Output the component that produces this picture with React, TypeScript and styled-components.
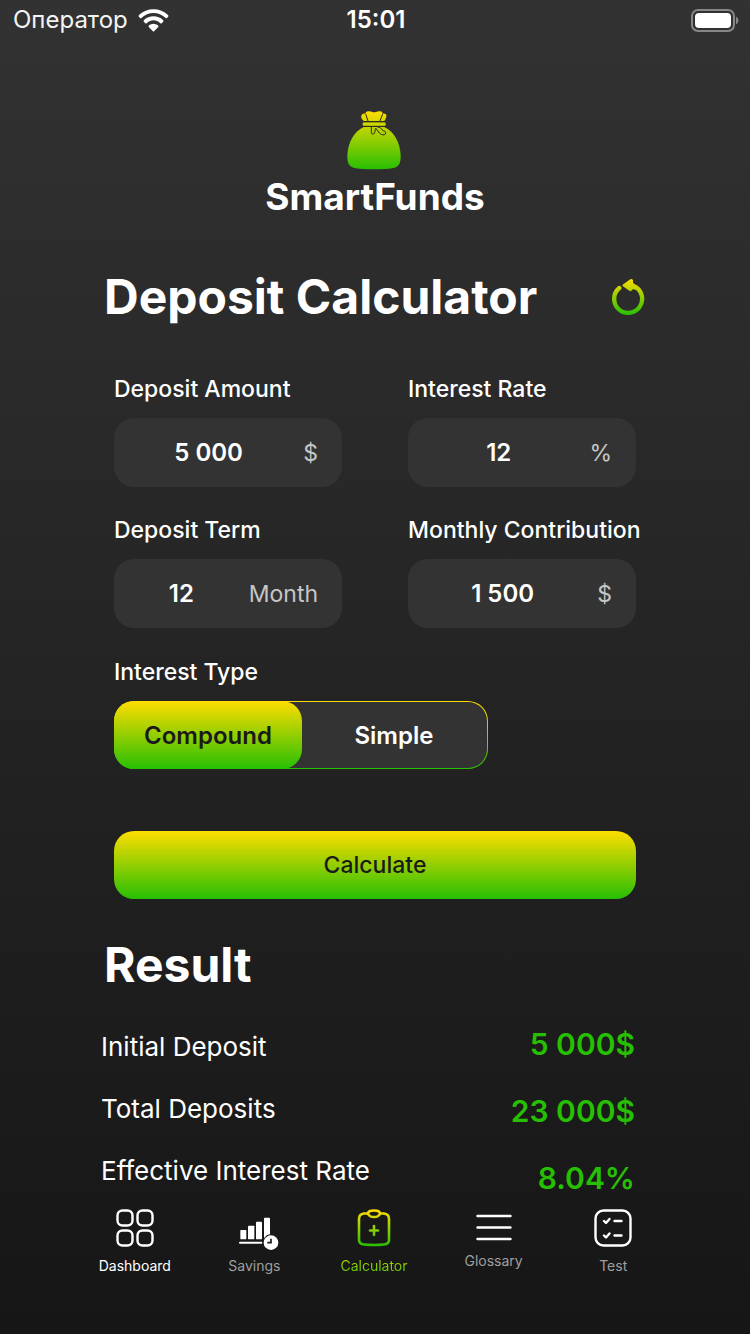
import React, { useState } from "react";
import styled, { createGlobalStyle } from "styled-components";

const YELLOW = "#ffdd00";
const GREEN = "#27bf04";
const FILL = `linear-gradient(180deg, ${YELLOW}, ${GREEN})`;

const GlobalStyle = createGlobalStyle`
  *, *::before, *::after { box-sizing: border-box; }
  body {
    margin: 0;
    background: #161616;
    color: #fff;
    font-family: Inter, "Liberation Sans", sans-serif;
  }
  button, input { font: inherit; color: inherit; }
`;

const Screen = styled.div`
  display: flex;
  flex-direction: column;
  min-height: 100vh;
  background: linear-gradient(180deg, #323232, #161616);
`;

const StatusBar = styled.header`
  display: grid;
  grid-template-columns: 1fr auto 1fr;
  align-items: center;
  height: 40px;
  padding: 0 11px 0 13px;
  font-size: 24px;
  line-height: 28px;
`;

const Carrier = styled.span`
  display: flex;
  align-items: center;
  gap: 10px;
  color: #f4f4f4;
`;

const Clock = styled.time`
  font-weight: 600;
`;

const Battery = styled.svg`
  justify-self: end;
`;

const Brand = styled.div`
  display: flex;
  flex-direction: column;
  align-items: center;
  padding-top: 70px;
`;

const BrandName = styled.p`
  margin: 3px 0 0;
  font-size: 37px;
  font-weight: 700;
  line-height: 48px;
`;

const Main = styled.main`
  flex: 1;
  padding: 0 100px;
`;

const TitleRow = styled.div`
  display: flex;
  align-items: center;
  justify-content: space-between;
  margin-top: 44px;
  padding: 0 1px 0 4px;
`;

const Title = styled.h1`
  margin: 0;
  font-size: 48px;
  font-weight: 700;
  line-height: 64px;
  white-space: nowrap;
`;

const ResetButton = styled.button`
  display: flex;
  padding: 4px;
  border: 0;
  background: none;
`;

const Form = styled.form`
  padding: 44px 14px 0;
`;

const FieldGrid = styled.div`
  display: grid;
  grid-template-columns: 1fr 1fr;
  gap: 27px 66px;
`;

const Caption = styled.span`
  display: block;
  margin-bottom: 13px;
  font-size: 23px;
  font-weight: 500;
  line-height: 32px;
  white-space: nowrap;
`;

const FieldLabel = styled.label`
  display: block;
  min-width: 0;
`;

const FieldBox = styled.span`
  display: flex;
  align-items: center;
  height: 69px;
  padding-right: 24px;
  border-radius: 20px;
  background: #333;
`;

const FieldInput = styled.input`
  flex: 1;
  min-width: 0;
  padding: 0;
  border: 0;
  outline: 0;
  background: none;
  font-size: 24px;
  font-weight: 600;
  text-align: center;
`;

const Unit = styled.span`
  color: #c6c6c6;
  font-size: 23px;
  font-weight: 400;
`;

const TypeGroup = styled.fieldset`
  margin: 28px 0 0;
  padding: 0;
  border: 0;
`;

const TypeLegend = styled.legend`
  padding: 0 0 13px;
  font-size: 23px;
  font-weight: 500;
  line-height: 32px;
`;

const Segments = styled.div`
  display: flex;
  width: calc(72% - 2px);
  height: 68px;
  border: 1px solid transparent;
  border-radius: 20px;
  background: linear-gradient(#333, #333) padding-box, ${FILL} border-box;
`;

const Segment = styled.label<{ $active: boolean }>`
  display: flex;
  flex: 1;
  align-items: center;
  justify-content: center;
  position: relative;
  margin: -1px;
  border-radius: 20px;
  background: ${(p) => (p.$active ? FILL : "none")};
  color: ${(p) => (p.$active ? "#1a1a1a" : "#fff")};
  font-size: 24px;
  font-weight: 600;

  input {
    position: absolute;
    inset: 0;
    margin: 0;
    opacity: 0;
  }
`;

const Submit = styled.button`
  width: 100%;
  height: 68px;
  margin-top: 62px;
  border: 0;
  border-radius: 20px;
  background: ${FILL};
  color: #1a1a1a;
  font-size: 23px;
  font-weight: 500;
`;

const ResultTitle = styled.h2`
  margin: 34px 0 0;
  padding-left: 4px;
  font-size: 48px;
  font-weight: 700;
  line-height: 64px;
`;

const Results = styled.section`
  display: flex;
  justify-content: space-between;
  align-items: flex-start;
  padding: 14px 15px 0 1px;
`;

const ResultNames = styled.ul`
  margin: 5px 0 0;
  padding: 0;
  list-style: none;
  font-size: 26px;
  line-height: 62px;
`;

const ResultValues = styled.ul`
  margin: 0;
  padding: 0;
  list-style: none;
  color: ${GREEN};
  font-size: 30px;
  font-weight: 600;
  line-height: 67px;
  text-align: right;
`;

const TabBar = styled.nav`
  display: grid;
  grid-template-columns: repeat(5, 1fr);
  align-items: start;
  height: 127px;
  margin-top: -4px;
  padding: 0 77px 0 75px;
`;

const Tab = styled.a<{ $tone: "bright" | "muted" | "accent" }>`
  display: flex;
  flex-direction: column;
  align-items: center;
  gap: 8px;
  color: #fff;
  font-size: 14px;
  line-height: 20px;
  text-decoration: none;

  span {
    color: ${(p) => (p.$tone === "muted" ? "#9f9f9f" : "#fff")};
    ${(p) =>
      p.$tone === "accent" &&
      "color: transparent; background: linear-gradient(180deg, #c8d600, #45c402); background-clip: text; -webkit-background-clip: text;"}
  }
`;

const WifiIcon = () => (
  <svg width="31" height="23" viewBox="0 0 93 69" fill="#fff" aria-hidden="true">
    <path d="M46.500 1C63 1 78 7 90 18Q93 21 90 24L87 27Q85 29 82 26C72 17 60 12 46.500 12S21 17 11 26Q8 29 6 27L3 24Q0 21 3 18C15 7 30 1 46.500 1Z" />
    <path d="M46.500 22C57 22 67 26 75 33Q78 36 75 39L71 43Q69 45 66 42C60 37 54 34 46.500 34S33 37 27 42Q24 45 22 43L18 39Q15 36 18 33C26 26 36 22 46.500 22Z" />
    <path d="M46.500 44Q54 44 60 49Q63 52 60 55L49 66Q46.500 69 44 66L33 55Q30 52 33 49Q39 44 46.500 44Z" />
  </svg>
);

const BatteryIcon = () => (
  <Battery width="49" height="24" viewBox="0 0 49 24" role="img" aria-label="Battery">
    <rect x="2" y="2" width="42" height="21" rx="6" fill="none" stroke="#868686" strokeWidth="2" />
    <rect x="5" y="5" width="36" height="15" rx="4" fill="#fff" />
    <path d="M46 8.500Q48.500 10 48.500 12.500T46 16.500Z" fill="#868686" />
  </Battery>
);

const BagIcon = () => (
  <svg width="56" height="60" viewBox="291 29 168 180" aria-hidden="true">
    <defs>
      <linearGradient id="bag" gradientUnits="userSpaceOnUse" x1="0" y1="32" x2="0" y2="208">
        <stop offset="0" stopColor={YELLOW} />
        <stop offset="1" stopColor={GREEN} />
      </linearGradient>
    </defs>
    <path
      fill="url(#bag)"
      d="M341 80H403C432 93 450 127 452 164C453 190 446 200 427 204C402 208 342 208 317 204C298 200 291 190 292 164C294 127 312 93 341 80Z"
    />
    <path
      fill="url(#bag)"
      d="M341 62C333 55 331 48 337 41Q342 39 346 40Q347 34 353 33Q362 32 367 35Q372 37 378 35Q384 32 392 33Q397 34 398 40Q403 39 408 42Q412 49 403 62Z"
    />
    <rect x="338" y="66" width="69" height="11" rx="4" fill="url(#bag)" />
    <g fill="none" stroke="#2d2d18" strokeWidth="3" strokeLinejoin="round">
      <path d="M347 41L354 62M398 41L390 62M338 64H406M338 78H406" />
      <path d="M364 79V98Q366 103 371 101Q376 98 376 84M377 83L388 98Q394 104 402 104Q408 102 407 96Q406 92 400 92L391 82Q387 79 383 81" />
    </g>
  </svg>
);

const ResetIcon = () => (
  <svg width="34" height="38" viewBox="63 55 102 114" aria-hidden="true">
    <defs>
      <linearGradient id="reset" gradientUnits="userSpaceOnUse" x1="0" y1="57" x2="0" y2="165">
        <stop offset="0" stopColor={YELLOW} />
        <stop offset="1" stopColor={GREEN} />
      </linearGradient>
    </defs>
    <path d="M88 85A42 42 0 1 0 135 81" fill="none" stroke="url(#reset)" strokeWidth="13" strokeLinecap="round" />
    <path
      d="M100 76L121 61Q126 58 127 62V70L142 84L136 88L127 86L125 90Q122 94 118 91L101 79Q98 77 100 76Z"
      fill="url(#reset)"
      stroke="url(#reset)"
      strokeWidth="4"
      strokeLinejoin="round"
    />
  </svg>
);

const DashboardIcon = () => (
  <svg width="40" height="40" viewBox="0 0 40 40" fill="none" stroke="#fff" strokeWidth="2.400" aria-hidden="true">
    <rect x="2.500" y="2.500" width="15" height="15" rx="5" />
    <rect x="22.500" y="2.500" width="15" height="15" rx="5" />
    <rect x="2.500" y="22.500" width="15" height="15" rx="5" />
    <rect x="22.500" y="22.500" width="15" height="15" rx="5" />
  </svg>
);

const SavingsIcon = () => (
  <svg width="40" height="40" viewBox="435 54 120 120" fill="#fff" overflow="visible" aria-hidden="true">
    <rect x="454" y="120" width="18" height="28" rx="2" />
    <rect x="477" y="107" width="19" height="41" rx="2" />
    <rect x="501" y="95" width="18" height="53" rx="2" />
    <path d="M525 85Q525 83 528 83H540Q543 83 543 86V133Q532 134 526 143L525 148Z" />
    <rect x="450" y="155" width="70" height="6" rx="3" />
    <circle cx="546" cy="158" r="22" />
    <path d="M546 146V158H535" fill="none" stroke="#191919" strokeWidth="5" />
  </svg>
);

const CalculatorIcon = () => (
  <svg width="40" height="40" viewBox="0 0 40 40" fill="none" stroke="url(#clip)" strokeWidth="2.600" strokeLinecap="round" strokeLinejoin="round" aria-hidden="true">
    <defs>
      <linearGradient id="clip" gradientUnits="userSpaceOnUse" x1="0" y1="2" x2="0" y2="38">
        <stop offset="0" stopColor={YELLOW} />
        <stop offset="1" stopColor={GREEN} />
      </linearGradient>
    </defs>
    <path d="M14 5.500H10Q5 6 5 11V32Q5 36 10 36.500Q20 37.500 30 36.500Q35 36 35 32V11Q35 6 30 5.500H26" />
    <path d="M14 5.500Q14 2.500 20 2.500T26 5.500Q25 9 20 9T14 5.500Z" />
    <path d="M20 18V27M16 22.500H24" />
  </svg>
);

const GlossaryIcon = () => (
  <svg width="40" height="35" viewBox="0 0 40 35" fill="none" stroke="#fff" strokeWidth="2.400" strokeLinecap="round" aria-hidden="true">
    <path d="M3.500 8H36.500M3.500 19.500H36.500M3.500 31H36.500" />
  </svg>
);

const TestIcon = () => (
  <svg width="40" height="40" viewBox="0 0 40 40" fill="none" stroke="#fff" strokeWidth="2.400" strokeLinecap="round" strokeLinejoin="round" aria-hidden="true">
    <rect x="2.500" y="2.500" width="35" height="35" rx="8" />
    <path d="M11 13L13 15L16.500 11M21.500 13H28.500M11 27.500L13 29.500L16.500 25.500M21.500 27.500H28.500" />
  </svg>
);

const fields = [
  { id: "amount", label: "Deposit Amount", value: "5 000", unit: "$" },
  { id: "rate", label: "Interest Rate", value: "12", unit: "%" },
  { id: "term", label: "Deposit Term", value: "12", unit: "Month" },
  { id: "monthly", label: "Monthly Contribution", value: "1 500", unit: "$" },
];

const results = [
  { name: "Initial Deposit", value: "5 000$" },
  { name: "Total Deposits", value: "23 000$" },
  { name: "Effective Interest Rate", value: "8.04%" },
];

const tabs = [
  { name: "Dashboard", tone: "bright", Icon: DashboardIcon },
  { name: "Savings", tone: "muted", Icon: SavingsIcon },
  { name: "Calculator", tone: "accent", Icon: CalculatorIcon },
  { name: "Glossary", tone: "muted", Icon: GlossaryIcon },
  { name: "Test", tone: "muted", Icon: TestIcon },
] as const;

export default function App() {
  const [type, setType] = useState("Compound");

  return (
    <Screen>
      <GlobalStyle />
      <StatusBar>
        <Carrier>
          Оператор
          <WifiIcon />
        </Carrier>
        <Clock>15:01</Clock>
        <BatteryIcon />
      </StatusBar>
      <Main>
        <Brand>
          <BagIcon />
          <BrandName>SmartFunds</BrandName>
        </Brand>
        <TitleRow>
          <Title>Deposit Calculator</Title>
          <ResetButton type="button" aria-label="Reset">
            <ResetIcon />
          </ResetButton>
        </TitleRow>
        <Form onSubmit={(e) => e.preventDefault()}>
          <FieldGrid>
            {fields.map((f) => (
              <FieldLabel key={f.id} htmlFor={f.id}>
                <Caption>{f.label}</Caption>
                <FieldBox>
                  <FieldInput id={f.id} type="text" inputMode="numeric" defaultValue={f.value} />
                  <Unit>{f.unit}</Unit>
                </FieldBox>
              </FieldLabel>
            ))}
          </FieldGrid>
          <TypeGroup>
            <TypeLegend>Interest Type</TypeLegend>
            <Segments>
              {["Compound", "Simple"].map((name) => (
                <Segment key={name} $active={type === name}>
                  <input type="radio" name="type" checked={type === name} onChange={() => setType(name)} />
                  {name}
                </Segment>
              ))}
            </Segments>
          </TypeGroup>
          <Submit type="submit">Calculate</Submit>
        </Form>
        <ResultTitle>Result</ResultTitle>
        <Results>
          <ResultNames>
            {results.map((r) => (
              <li key={r.name}>{r.name}</li>
            ))}
          </ResultNames>
          <ResultValues>
            {results.map((r) => (
              <li key={r.name}>{r.value}</li>
            ))}
          </ResultValues>
        </Results>
      </Main>
      <TabBar>
        {tabs.map(({ name, tone, Icon }) => (
          <Tab key={name} href="#" $tone={tone}>
            <Icon />
            <span>{name}</span>
          </Tab>
        ))}
      </TabBar>
    </Screen>
  );
}
